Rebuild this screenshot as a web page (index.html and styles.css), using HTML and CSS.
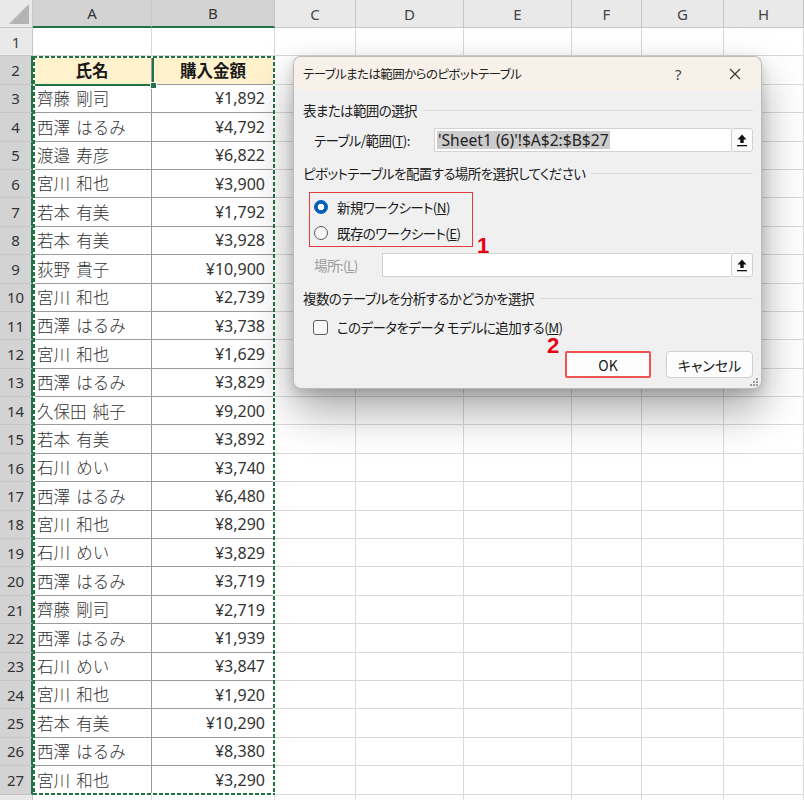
FILE: index.html
```html
<!DOCTYPE html>
<html lang="ja">
<head>
<meta charset="utf-8">
<title>ピボットテーブル</title>
<link rel="stylesheet" href="styles.css">
</head>
<body>
<div class="sheet-wrap">
  <div class="sheet">
    <div class="row">
      <div class="corner"><span class="tri"></span></div>
      <div class="ch sel">A</div><div class="ch sel">B</div><div class="ch">C</div><div class="ch">D</div><div class="ch">E</div><div class="ch">F</div><div class="ch">G</div><div class="ch">H</div>
    </div>
    <div class="row"><div class="rh">1</div><div class="cell"></div><div class="cell"></div><div class="cell"></div><div class="cell"></div><div class="cell"></div><div class="cell"></div><div class="cell"></div><div class="cell"></div></div>
    <div class="row"><div class="rh sel">2</div><div class="cell t hd">氏名</div><div class="cell t hd">購入金額</div><div class="cell"></div><div class="cell"></div><div class="cell"></div><div class="cell"></div><div class="cell"></div><div class="cell"></div></div>
    <div class="row"><div class="rh sel">3</div><div class="cell t">齊藤 剛司</div><div class="cell t num">¥1,892</div><div class="cell"></div><div class="cell"></div><div class="cell"></div><div class="cell"></div><div class="cell"></div><div class="cell"></div></div>
    <div class="row"><div class="rh sel">4</div><div class="cell t">西澤 はるみ</div><div class="cell t num">¥4,792</div><div class="cell"></div><div class="cell"></div><div class="cell"></div><div class="cell"></div><div class="cell"></div><div class="cell"></div></div>
    <div class="row"><div class="rh sel">5</div><div class="cell t">渡邉 寿彦</div><div class="cell t num">¥6,822</div><div class="cell"></div><div class="cell"></div><div class="cell"></div><div class="cell"></div><div class="cell"></div><div class="cell"></div></div>
    <div class="row"><div class="rh sel">6</div><div class="cell t">宮川 和也</div><div class="cell t num">¥3,900</div><div class="cell"></div><div class="cell"></div><div class="cell"></div><div class="cell"></div><div class="cell"></div><div class="cell"></div></div>
    <div class="row"><div class="rh sel">7</div><div class="cell t">若本 有美</div><div class="cell t num">¥1,792</div><div class="cell"></div><div class="cell"></div><div class="cell"></div><div class="cell"></div><div class="cell"></div><div class="cell"></div></div>
    <div class="row"><div class="rh sel">8</div><div class="cell t">若本 有美</div><div class="cell t num">¥3,928</div><div class="cell"></div><div class="cell"></div><div class="cell"></div><div class="cell"></div><div class="cell"></div><div class="cell"></div></div>
    <div class="row"><div class="rh sel">9</div><div class="cell t">荻野 貴子</div><div class="cell t num">¥10,900</div><div class="cell"></div><div class="cell"></div><div class="cell"></div><div class="cell"></div><div class="cell"></div><div class="cell"></div></div>
    <div class="row"><div class="rh sel">10</div><div class="cell t">宮川 和也</div><div class="cell t num">¥2,739</div><div class="cell"></div><div class="cell"></div><div class="cell"></div><div class="cell"></div><div class="cell"></div><div class="cell"></div></div>
    <div class="row"><div class="rh sel">11</div><div class="cell t">西澤 はるみ</div><div class="cell t num">¥3,738</div><div class="cell"></div><div class="cell"></div><div class="cell"></div><div class="cell"></div><div class="cell"></div><div class="cell"></div></div>
    <div class="row"><div class="rh sel">12</div><div class="cell t">宮川 和也</div><div class="cell t num">¥1,629</div><div class="cell"></div><div class="cell"></div><div class="cell"></div><div class="cell"></div><div class="cell"></div><div class="cell"></div></div>
    <div class="row"><div class="rh sel">13</div><div class="cell t">西澤 はるみ</div><div class="cell t num">¥3,829</div><div class="cell"></div><div class="cell"></div><div class="cell"></div><div class="cell"></div><div class="cell"></div><div class="cell"></div></div>
    <div class="row"><div class="rh sel">14</div><div class="cell t">久保田 純子</div><div class="cell t num">¥9,200</div><div class="cell"></div><div class="cell"></div><div class="cell"></div><div class="cell"></div><div class="cell"></div><div class="cell"></div></div>
    <div class="row"><div class="rh sel">15</div><div class="cell t">若本 有美</div><div class="cell t num">¥3,892</div><div class="cell"></div><div class="cell"></div><div class="cell"></div><div class="cell"></div><div class="cell"></div><div class="cell"></div></div>
    <div class="row"><div class="rh sel">16</div><div class="cell t">石川 めい</div><div class="cell t num">¥3,740</div><div class="cell"></div><div class="cell"></div><div class="cell"></div><div class="cell"></div><div class="cell"></div><div class="cell"></div></div>
    <div class="row"><div class="rh sel">17</div><div class="cell t">西澤 はるみ</div><div class="cell t num">¥6,480</div><div class="cell"></div><div class="cell"></div><div class="cell"></div><div class="cell"></div><div class="cell"></div><div class="cell"></div></div>
    <div class="row"><div class="rh sel">18</div><div class="cell t">宮川 和也</div><div class="cell t num">¥8,290</div><div class="cell"></div><div class="cell"></div><div class="cell"></div><div class="cell"></div><div class="cell"></div><div class="cell"></div></div>
    <div class="row"><div class="rh sel">19</div><div class="cell t">石川 めい</div><div class="cell t num">¥3,829</div><div class="cell"></div><div class="cell"></div><div class="cell"></div><div class="cell"></div><div class="cell"></div><div class="cell"></div></div>
    <div class="row"><div class="rh sel">20</div><div class="cell t">西澤 はるみ</div><div class="cell t num">¥3,719</div><div class="cell"></div><div class="cell"></div><div class="cell"></div><div class="cell"></div><div class="cell"></div><div class="cell"></div></div>
    <div class="row"><div class="rh sel">21</div><div class="cell t">齊藤 剛司</div><div class="cell t num">¥2,719</div><div class="cell"></div><div class="cell"></div><div class="cell"></div><div class="cell"></div><div class="cell"></div><div class="cell"></div></div>
    <div class="row"><div class="rh sel">22</div><div class="cell t">西澤 はるみ</div><div class="cell t num">¥1,939</div><div class="cell"></div><div class="cell"></div><div class="cell"></div><div class="cell"></div><div class="cell"></div><div class="cell"></div></div>
    <div class="row"><div class="rh sel">23</div><div class="cell t">石川 めい</div><div class="cell t num">¥3,847</div><div class="cell"></div><div class="cell"></div><div class="cell"></div><div class="cell"></div><div class="cell"></div><div class="cell"></div></div>
    <div class="row"><div class="rh sel">24</div><div class="cell t">宮川 和也</div><div class="cell t num">¥1,920</div><div class="cell"></div><div class="cell"></div><div class="cell"></div><div class="cell"></div><div class="cell"></div><div class="cell"></div></div>
    <div class="row"><div class="rh sel">25</div><div class="cell t">若本 有美</div><div class="cell t num">¥10,290</div><div class="cell"></div><div class="cell"></div><div class="cell"></div><div class="cell"></div><div class="cell"></div><div class="cell"></div></div>
    <div class="row"><div class="rh sel">26</div><div class="cell t">西澤 はるみ</div><div class="cell t num">¥8,380</div><div class="cell"></div><div class="cell"></div><div class="cell"></div><div class="cell"></div><div class="cell"></div><div class="cell"></div></div>
    <div class="row"><div class="rh sel">27</div><div class="cell t">宮川 和也</div><div class="cell t num">¥3,290</div><div class="cell"></div><div class="cell"></div><div class="cell"></div><div class="cell"></div><div class="cell"></div><div class="cell"></div></div>
    <div class="row"><div class="rh"></div><div class="cell"></div><div class="cell"></div><div class="cell"></div><div class="cell"></div><div class="cell"></div><div class="cell"></div><div class="cell"></div><div class="cell"></div></div>
  </div>

  <div class="active-cell"><span class="fill-handle"></span></div>
  <div class="ants"></div>

  <div class="dialog">
    <div class="titlebar">
      <span class="title">テーブルまたは範囲からのピボットテーブル</span>
      <span class="help">?</span>
      <span class="close"><svg width="12" height="12" viewBox="0 0 12 12"><path d="M1 1L11 11M11 1L1 11" stroke="#333" stroke-width="1.1" fill="none"/></svg></span>
    </div>
    <div class="body">
      <div class="group"><span>表または範囲の選択</span><i class="rule"></i></div>
      <div class="field field-range">
        <span class="label">テーブル/範囲(<u>T</u>):</span>
        <div class="input"><span class="selected">'Sheet1 (6)'!$A$2:$B$27</span></div>
        <span class="refbtn"><svg width="12" height="14" viewBox="0 0 12 14"><path d="M6 1.5L1.5 6.5H4.3V10H7.7V6.5H10.5Z" fill="#111"/><rect x="1" y="12" width="10" height="1.3" fill="#111"/></svg></span>
      </div>
      <div class="group group-2"><span>ピボットテーブルを配置する場所を選択してください</span><i class="rule"></i></div>
      <div class="radios">
        <div class="radio-row"><span class="radio on"></span><span>新規ワークシート(<u>N</u>)</span></div>
        <div class="radio-row"><span class="radio"></span><span>既存のワークシート(<u>E</u>)</span></div>
      </div>
      <div class="field field-place disabled">
        <span class="label">場所:(<u>L</u>)</span>
        <div class="input"></div>
        <span class="refbtn"><svg width="12" height="14" viewBox="0 0 12 14"><path d="M6 1.5L1.5 6.5H4.3V10H7.7V6.5H10.5Z" fill="#111"/><rect x="1" y="12" width="10" height="1.3" fill="#111"/></svg></span>
      </div>
      <div class="group group-3"><span>複数のテーブルを分析するかどうかを選択</span><i class="rule"></i></div>
      <div class="check-row"><span class="checkbox"></span><span class="check-text">このデータをデータ モデルに追加する(<u>M</u>)</span></div>
      <div class="buttons">
        <span class="btn btn-ok">OK</span>
        <span class="btn btn-cancel">キャンセル</span>
      </div>
    </div>
    <span class="step step-1">1</span>
    <span class="step step-2">2</span>
    <svg class="grip" width="9" height="9" viewBox="0 0 9 9"><g fill="#9a9a9a"><rect x="7" y="1" width="2" height="2"/><rect x="4" y="4" width="2" height="2"/><rect x="7" y="4" width="2" height="2"/><rect x="1" y="7" width="2" height="2"/><rect x="4" y="7" width="2" height="2"/><rect x="7" y="7" width="2" height="2"/></g></svg>
  </div>
</div>
</body>
</html>
```
FILE: styles.css
```css
* { box-sizing: border-box; }
html, body { margin: 0; padding: 0; }
body {
  width: 804px;
  height: 800px;
  overflow: hidden;
  background: #ffffff;
  font-family: "Noto Sans CJK JP", "Noto Sans", sans-serif;
  color: #222222;
}

.sheet-wrap {
  position: relative;
  width: 804px;
  height: 800px;
  overflow: hidden;
}

.sheet {
  display: grid;
  grid-template-columns: 33px 119px 123px 81px 108px 108px 70px 82px 80px;
  grid-template-rows: 28px;
  grid-auto-rows: 28.4px;
}

.row { display: contents; }

.corner {
  position: relative;
  background: #e9e9e9;
  border-right: 1px solid #c6c6c6;
  border-bottom: 1px solid #c6c6c6;
}
.corner .tri {
  position: absolute;
  right: 3px;
  bottom: 3px;
  width: 20px;
  height: 20px;
  background: #b4b4b4;
  clip-path: polygon(100% 0, 100% 100%, 0 100%);
}

.ch {
  display: flex;
  align-items: center;
  justify-content: center;
  background: #e9e9e9;
  border-right: 1px solid #c6c6c6;
  border-bottom: 1px solid #c6c6c6;
  font-family: "Noto Sans", sans-serif;
  font-size: 15px;
  color: #444444;
}
.ch.sel {
  background: #d3d3d3;
  border-bottom: 2px solid #217346;
  color: #333333;
}

.rh {
  display: flex;
  align-items: center;
  justify-content: center;
  background: #e9e9e9;
  border-right: 1px solid #c6c6c6;
  border-bottom: 1px solid #c6c6c6;
  font-family: "Noto Sans", sans-serif;
  font-size: 15px;
  color: #444444;
}
.rh.sel {
  background: #d3d3d3;
  border-right: 2px solid #217346;
  color: #333333;
}

.cell {
  display: flex;
  align-items: center;
  padding: 0 4px;
  border-right: 1px solid #d9d9d9;
  border-bottom: 1px solid #d9d9d9;
  font-size: 16.5px;
  font-weight: 300;
  word-spacing: 2.5px;
  line-height: 1;
  white-space: nowrap;
  overflow: hidden;
  color: #333333;
}
.cell.t {
  border-right-color: #9c9c9c;
  border-bottom-color: #9c9c9c;
}
.cell.num {
  justify-content: flex-end;
  padding-right: 9px;
  font-family: "Noto Sans", sans-serif;
  font-size: 16px;
  font-weight: 400;
}
.cell.hd {
  justify-content: center;
  background: #fff2cc;
  font-weight: 700;
  color: #1a1a1a;
}

/* selection overlays */
.active-cell {
  position: absolute;
  left: 33px;
  top: 56px;
  width: 121px;
  height: 30px;
  border: 2px solid #217346;
}
.fill-handle {
  position: absolute;
  right: -5px;
  bottom: -5px;
  width: 7px;
  height: 7px;
  background: #217346;
  border: 1px solid #ffffff;
}
.ants {
  position: absolute;
  left: 33px;
  top: 56px;
  width: 242px;
  height: 739px;
  background:
    repeating-linear-gradient(90deg, #217346 0 4px, #ffffff 4px 6px) top left / 100% 2px no-repeat,
    repeating-linear-gradient(90deg, #217346 0 4px, #ffffff 4px 6px) bottom left / 100% 2px no-repeat,
    repeating-linear-gradient(180deg, #217346 0 4px, #ffffff 4px 6px) top left / 2px 100% no-repeat,
    repeating-linear-gradient(180deg, #217346 0 4px, #ffffff 4px 6px) top right / 2px 100% no-repeat;
}

/* dialog */
.dialog {
  position: absolute;
  left: 293px;
  top: 56px;
  width: 469px;
  height: 333px;
  display: flex;
  flex-direction: column;
  background: #f0f0f0;
  border: 1px solid rgba(0, 0, 0, 0.22);
  border-radius: 8px;
  overflow: hidden;
  box-shadow: 0 22px 44px rgba(0, 0, 0, 0.34), 0 4px 12px rgba(0, 0, 0, 0.16);
  font-family: "Noto Sans CJK JP", sans-serif;
  font-feature-settings: "palt";
  font-size: 13.5px;
  letter-spacing: -0.6px;
  color: #1a1a1a;
}

.titlebar {
  display: flex;
  align-items: center;
  height: 33px;
  flex: none;
  padding-left: 9px;
  background: #f8f1e9;
  font-size: 12.5px;
  letter-spacing: -0.6px;
}
.titlebar .title { flex: 1; color: #222222; }
.titlebar .help {
  width: 46px;
  margin-right: 8px;
  text-align: center;
  font-family: "Noto Sans", sans-serif;
  font-size: 15px;
  color: #444444;
}
.titlebar .close {
  width: 52px;
  display: flex;
  justify-content: center;
  align-items: center;
}

.body {
  display: flex;
  flex-direction: column;
  padding: 0 8px 0 9px;
}

.group {
  display: flex;
  align-items: center;
  gap: 6px;
  height: 20px;
  margin-top: 10px;
  white-space: nowrap;
}
.group .rule {
  flex: 1;
  height: 1px;
  background: #dadada;
}
.group-2 { margin-top: 11px; }
.group-3 { margin-top: 11px; }

.field {
  display: flex;
  align-items: center;
  height: 24px;
  margin-top: 8px;
  padding-left: 11px;
}
.field .label { flex: none; white-space: nowrap; }
.field-range .label { width: 120px; }
.field-place .label { width: 68px; }
.field-place { margin-top: 6px; }
.field.disabled .label { color: #9a9a9a; }

.input {
  flex: 1;
  height: 24px;
  display: flex;
  align-items: center;
  padding-left: 2px;
  background: #ffffff;
  border: 1px solid #d2d2d2;
  border-right: none;
}
.selected {
  display: flex;
  align-items: center;
  height: 18px;
  padding: 0 1px;
  background: #cccccc;
  font-family: "Noto Sans", sans-serif;
  font-size: 15.6px;
  letter-spacing: 0;
  color: #222222;
  white-space: nowrap;
}
.refbtn {
  flex: none;
  width: 22px;
  height: 24px;
  display: flex;
  align-items: center;
  justify-content: center;
  background: #fbfbfb;
  border: 1px solid #d0d0d0;
  border-radius: 3px;
}

.radios {
  align-self: flex-start;
  margin-top: 9px;
  margin-left: 6px;
  width: 164px;
  padding: 2px 0 1px 4px;
  border: 1px solid #e03c3c;
  display: flex;
  flex-direction: column;
  gap: 2px;
}
.radio-row {
  display: flex;
  align-items: center;
  gap: 9px;
  height: 24px;
  white-space: nowrap;
}
.radio {
  width: 14px;
  height: 14px;
  border-radius: 50%;
  border: 1px solid #5c5c5c;
  background: #f6f6f6;
  flex: none;
}
.radio.on {
  border-color: #005fb8;
  background: radial-gradient(circle, #ffffff 0 3px, #005fb8 3.6px);
}

.check-row {
  display: flex;
  align-items: center;
  gap: 9px;
  height: 20px;
  margin-top: 9px;
  padding-left: 10px;
  white-space: nowrap;
}
.check-text { line-height: 15px; }
.checkbox {
  flex: none;
  width: 15px;
  height: 15px;
  border: 1px solid #5c5c5c;
  border-radius: 3px;
  background: #f8f8f8;
}

.buttons {
  display: flex;
  justify-content: flex-end;
  gap: 15px;
  margin-top: 14px;
}
.btn {
  display: flex;
  align-items: center;
  justify-content: center;
  height: 27px;
  background: #fdfdfd;
  border: 1px solid #d0d0d0;
  border-radius: 4px;
  font-size: 14px;
  letter-spacing: 0;
  color: #1a1a1a;
}
.btn-ok {
  width: 86px;
  border: 2px solid #ef5454;
  border-radius: 2px;
}
.btn-cancel { width: 87px; }

.step {
  position: absolute;
  font-family: "Liberation Sans", sans-serif;
  font-weight: 700;
  font-size: 22px;
  line-height: 16px;
  letter-spacing: 0;
  color: #e50012;
}
.step-1 { left: 183px; top: 181px; }
.step-2 { left: 253px; top: 281px; }

.grip {
  position: absolute;
  right: 3px;
  bottom: 2px;
}
```
